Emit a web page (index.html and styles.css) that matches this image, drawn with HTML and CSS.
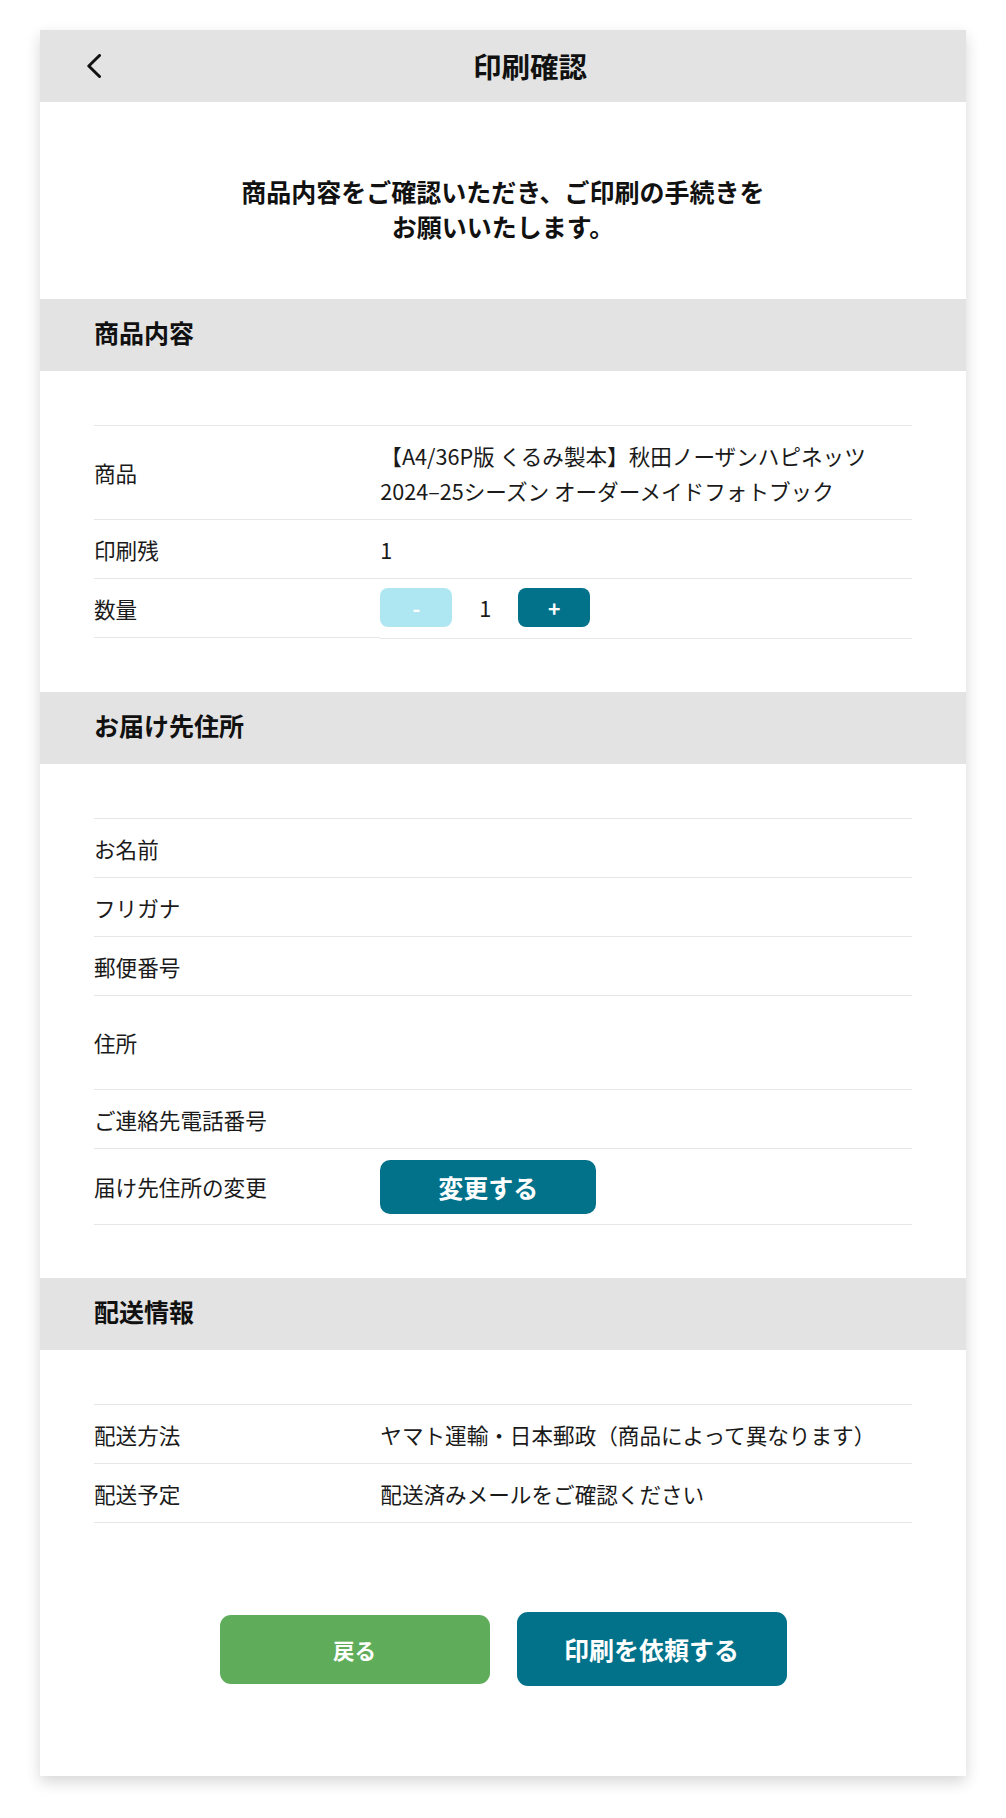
FILE: index.html
```html
<!DOCTYPE html>
<html lang="ja">
<head>
    <meta charset="UTF-8">
    <meta name="viewport" content="width=device-width, initial-scale=1.0">
    <title>印刷確認</title>
    <link rel="stylesheet" href="styles.css">
</head>
<body>
    <div class="card">
        <div class="top-bar">
            <button class="back-btn" aria-label="戻る">
                <svg width="14" height="24" viewBox="0 0 14 24">
                    <polyline points="12.5,1.5 1.8,12 12.5,22.5" fill="none" stroke="#111" stroke-width="3" stroke-linecap="round" stroke-linejoin="round"/>
                </svg>
            </button>
            <h1 class="top-title">印刷確認</h1>
        </div>

        <p class="intro">商品内容をご確認いただき、ご印刷の手続きを<br>お願いいたします。</p>

        <!-- 商品内容 -->
        <h2 class="section-title">商品内容</h2>
        <div class="info-table">
            <div class="info-row">
                <div class="info-label">商品</div>
                <div class="info-value">【A4/36P版 くるみ製本】秋田ノーザンハピネッツ<br>2024–25シーズン オーダーメイドフォトブック</div>
            </div>
            <div class="info-row">
                <div class="info-label">印刷残</div>
                <div class="info-value">1</div>
            </div>
            <div class="info-row qty-row">
                <div class="info-label">数量</div>
                <div class="info-value qty-value">
                    <button class="qty-btn qty-minus">-</button>
                    <span class="qty-num">1</span>
                    <button class="qty-btn qty-plus">+</button>
                </div>
            </div>
        </div>

        <!-- お届け先住所 -->
        <h2 class="section-title">お届け先住所</h2>
        <div class="info-table">
            <div class="info-row">
                <div class="info-label">お名前</div>
                <div class="info-value"></div>
            </div>
            <div class="info-row">
                <div class="info-label">フリガナ</div>
                <div class="info-value"></div>
            </div>
            <div class="info-row">
                <div class="info-label">郵便番号</div>
                <div class="info-value"></div>
            </div>
            <div class="info-row">
                <div class="info-label">住所</div>
                <div class="info-value two-lines"></div>
            </div>
            <div class="info-row">
                <div class="info-label">ご連絡先電話番号</div>
                <div class="info-value"></div>
            </div>
            <div class="info-row">
                <div class="info-label">届け先住所の変更</div>
                <div class="info-value change-value">
                    <button class="change-btn">変更する</button>
                </div>
            </div>
        </div>

        <!-- 配送情報 -->
        <h2 class="section-title">配送情報</h2>
        <div class="info-table">
            <div class="info-row">
                <div class="info-label">配送方法</div>
                <div class="info-value">ヤマト運輸・日本郵政（商品によって異なります）</div>
            </div>
            <div class="info-row">
                <div class="info-label">配送予定</div>
                <div class="info-value">配送済みメールをご確認ください</div>
            </div>
        </div>

        <div class="actions">
            <button class="btn-back">戻る</button>
            <button class="btn-order">印刷を依頼する</button>
        </div>
    </div>
</body>
</html>
```

FILE: styles.css
```css
* {
    margin: 0;
    padding: 0;
    box-sizing: border-box;
}
body {
    font-family: "Noto Sans CJK JP", "Noto Sans", sans-serif;
    font-size: 21.6px;
    color: #1a1a1a;
    background-color: #fff;
    padding: 30px 40px 42px;
}
button {
    font-family: inherit;
    border: none;
    cursor: pointer;
}
.card {
    width: 926px;
    background-color: #fff;
    box-shadow: 0 6px 14px rgba(0, 0, 0, 0.16);
}
.top-bar {
    display: flex;
    align-items: center;
    height: 72px;
    padding: 0 40px;
    background-color: #e3e3e3;
}
.back-btn {
    display: flex;
    align-items: center;
    width: 54px;
    height: 72px;
    padding-left: 7px;
    background: none;
}
.top-title {
    flex: 1;
    padding-bottom: 2px;
    text-align: center;
    font-size: 28.5px;
    font-weight: 700;
    color: #111;
}
.intro {
    padding: 72px 0 55px;
    text-align: center;
    font-size: 25px;
    font-weight: 700;
    line-height: 35px;
    color: #111;
}
.section-title {
    display: flex;
    align-items: center;
    height: 72px;
    padding: 0 0 7px 54px;
    background-color: #e3e3e3;
    font-size: 25px;
    font-weight: 700;
    color: #111;
}
.info-table {
    margin: 54px 54px 53px;
    border-top: 1px solid #e6e6e6;
}
.info-row {
    display: flex;
}
.info-label {
    display: flex;
    align-items: center;
    width: 35%;
    padding: 11.5px 0;
    line-height: 35px;
    border-bottom: 1px solid #e6e6e6;
}
.info-value {
    flex: 1;
    padding: 11.5px 0;
    line-height: 35px;
    min-height: 59px;
    border-bottom: 1px solid #e6e6e6;
}
.info-value.two-lines {
    min-height: 94px;
}
.qty-row {
    align-items: flex-start;
}
.qty-value {
    display: flex;
    align-items: center;
    padding: 9px 0 11px;
}
.qty-btn {
    width: 72px;
    height: 39px;
    border-radius: 8px;
    color: #fff;
    font-size: 21px;
    font-weight: 700;
}
.qty-minus {
    background-color: #aee6f1;
}
.qty-plus {
    background-color: #02728a;
}
.qty-num {
    width: 66px;
    text-align: center;
}
.change-value {
    padding: 11px 0 10px;
}
.change-btn {
    display: block;
    width: 216px;
    height: 54px;
    border-radius: 10px;
    background-color: #02728a;
    color: #fff;
    font-size: 25px;
    font-weight: 700;
}
.actions {
    display: flex;
    justify-content: center;
    align-items: center;
    gap: 27px;
    padding: 36px 0 90px;
}
.btn-back {
    width: 270px;
    height: 69px;
    border-radius: 11px;
    background-color: #5fad5a;
    color: #fff;
    font-size: 21.5px;
    font-weight: 700;
}
.btn-order {
    width: 270px;
    height: 74px;
    border-radius: 11px;
    background-color: #02728a;
    color: #fff;
    font-size: 25px;
    font-weight: 700;
}
```
